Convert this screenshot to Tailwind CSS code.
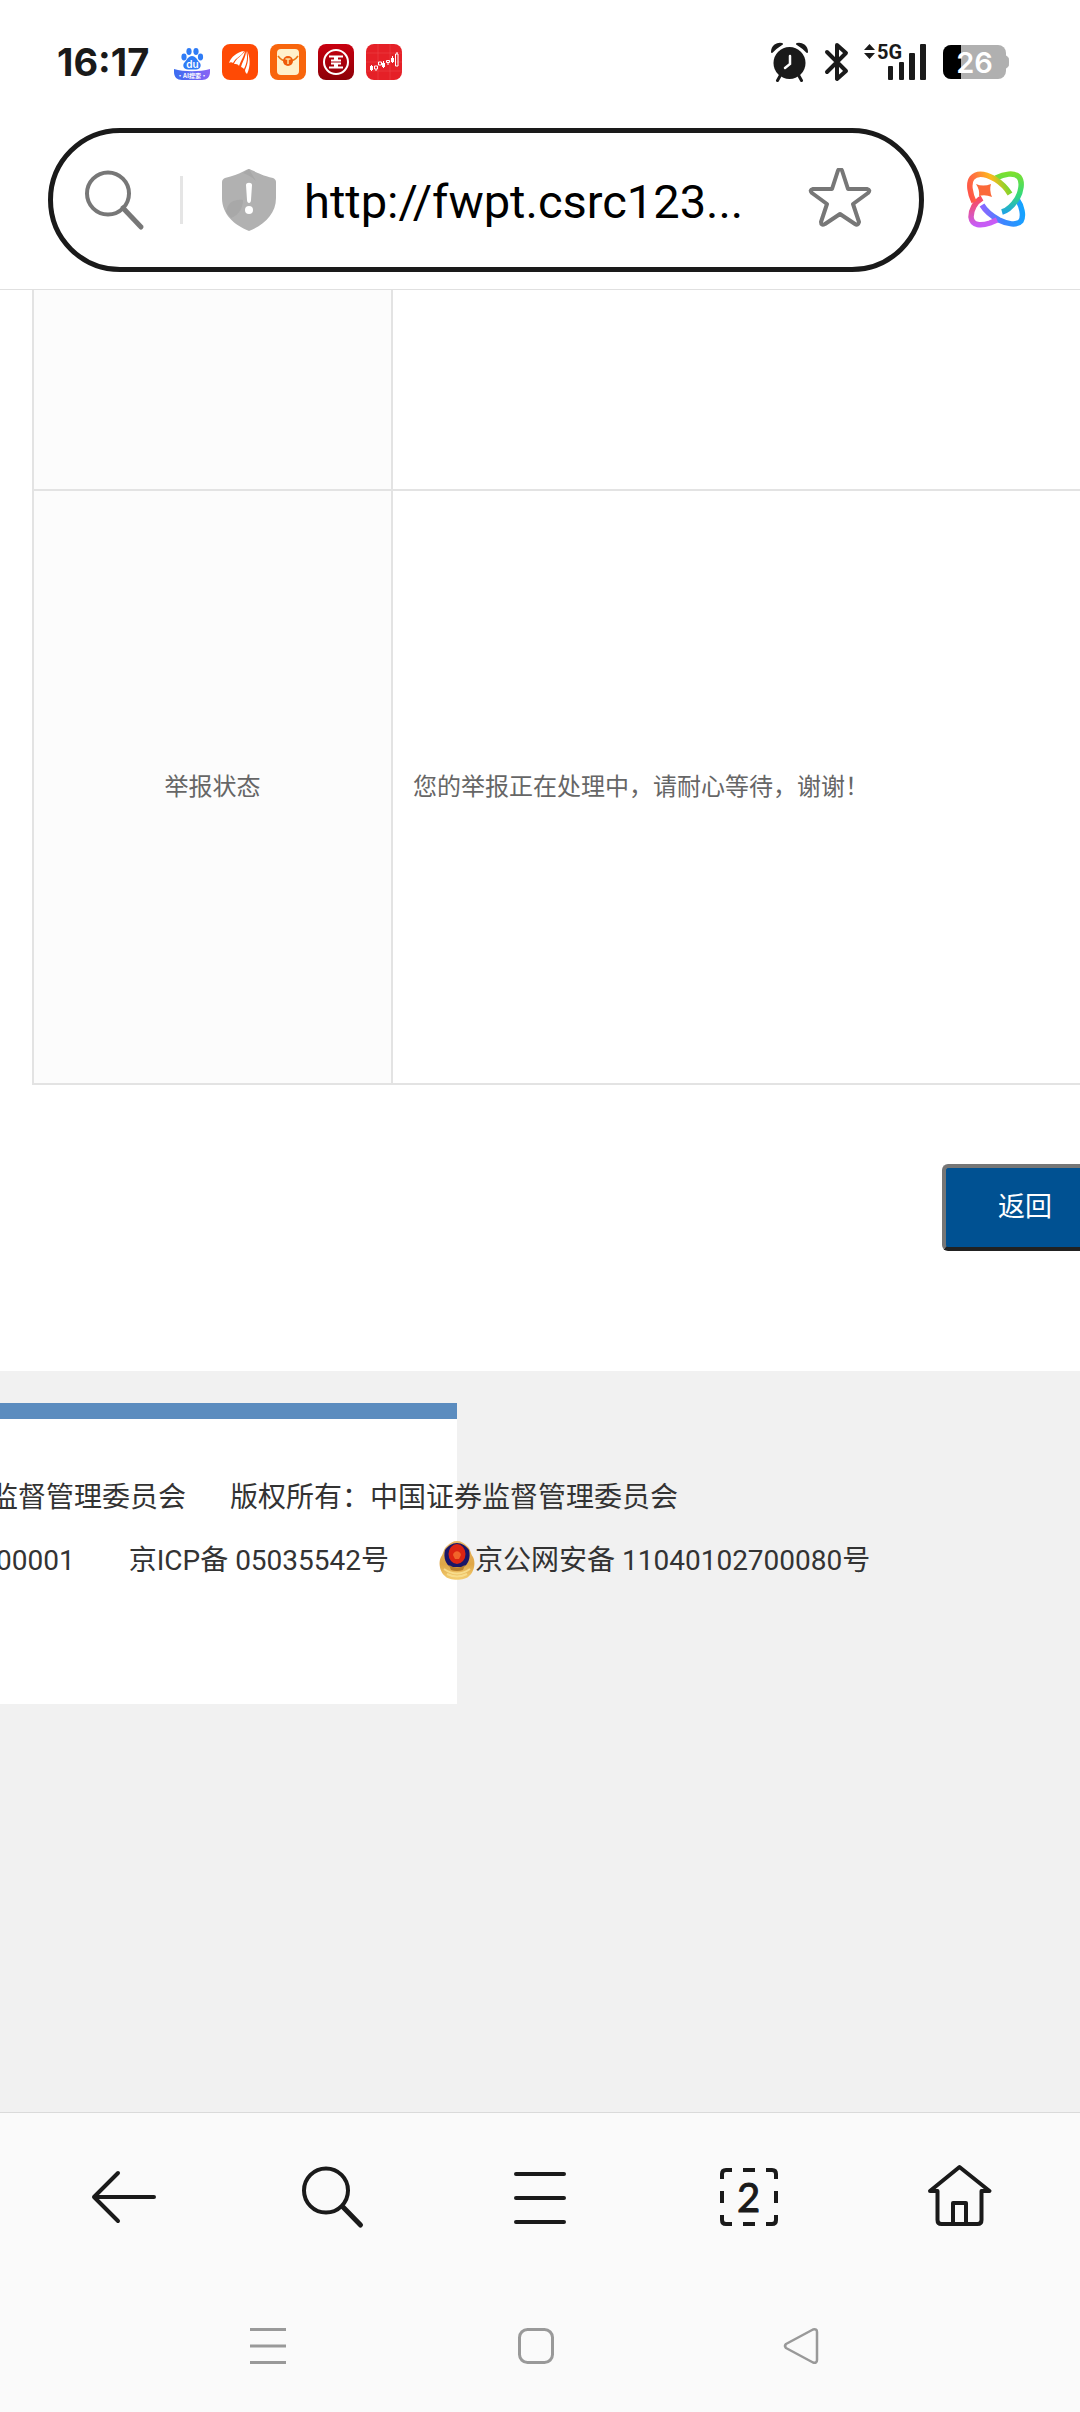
<!DOCTYPE html>
<html lang="zh-CN">
<head>
<meta charset="utf-8">
<meta name="viewport" content="width=device-width, initial-scale=1">
<title>举报状态</title>
<script src="https://cdn.jsdelivr.net/npm/@tailwindcss/browser@4"></script>
</head>
<body class="flex min-h-screen flex-col overflow-x-hidden bg-white font-['Roboto','Noto_Sans_CJK_SC',sans-serif] text-[#333333]">

<!-- Status bar -->
<div class="flex h-[124px] items-center pr-[71px] pl-[57px]">
  <time class="w-[117px] font-['Inter',sans-serif] text-[38px] font-bold text-[#1a1a1a]">16:17</time>
  <div class="flex gap-3">
    <svg class="size-9" viewBox="0 0 36 36" role="img" aria-label="百度">
      <defs><linearGradient id="bd" x1="0" y1="0" x2="1" y2="0"><stop offset="0" stop-color="#3a6df0"/><stop offset="1" stop-color="#8a63f5"/></linearGradient></defs>
      <g fill="#2f7cf6"><ellipse cx="10" cy="13" rx="2.600" ry="3.400"/><ellipse cx="15" cy="7.500" rx="2.600" ry="3.400"/><ellipse cx="22" cy="7.500" rx="2.600" ry="3.400"/><ellipse cx="26.500" cy="13" rx="2.600" ry="3.400"/><path d="M18 12c4 0 5 4 7.500 6.500s1 7-3.500 7h-8c-4.500 0-6-4.500-3.500-7S14 12 18 12z"/></g>
      <text x="18.500" y="23.500" text-anchor="middle" font-family="Inter" font-size="10" font-weight="600" fill="#fff">du</text>
      <path d="M0 25c10 3 26 3 36 0v3c0 5-3 8-8 8H8c-5 0-8-3-8-8z" fill="url(#bd)"/>
      <text x="18" y="33.500" text-anchor="middle" font-family="Noto Sans CJK SC" font-size="6" font-weight="700" fill="#fff">·AI搜索·</text>
    </svg>
    <svg class="size-9" viewBox="0 0 36 36" role="img" aria-label="应用">
      <rect width="36" height="36" rx="8" fill="#ff4a05"/>
      <g fill="#fff"><path d="M7 19c2-6 8-11 15-12 -2 5-8 6-11 12-1-1-3-1-4 0z"/><path d="M12 20c2-6 8-8 11-13-1 6-4 9-6 15-1-2-3-2-5-2z"/><path d="M24 7c0 6-3 9-5 16 1 0 2 1 3 2 3-6 4-12 2-18z"/><path d="M25 7c3 5 4 15 0 23-1-1-2-2-2-4 3-6 4-13 2-19z"/></g>
    </svg>
    <svg class="size-9" viewBox="0 0 36 36" role="img" aria-label="红包">
      <rect width="36" height="36" rx="8" fill="#f8650c"/><rect x="7" y="5" width="22" height="26" rx="4" fill="#fff0cb"/>
      <path d="M8 12c5 7 15 7 20 0" fill="none" stroke="#e87413" stroke-width="1.500"/><circle cx="18" cy="17" r="5" fill="#ef5a0b"/><path d="M15.500 15h5M18 15v5" stroke="#ffe0a0" stroke-width="1.500"/>
    </svg>
    <svg class="size-9" viewBox="0 0 36 36" role="img" aria-label="工商银行">
      <defs><linearGradient id="ic" x1="0" y1="0" x2="0" y2="1"><stop offset="0" stop-color="#c9000f"/><stop offset="1" stop-color="#8c0008"/></linearGradient></defs>
      <rect width="36" height="36" rx="8" fill="url(#ic)"/>
      <g fill="none" stroke="#fff" stroke-width="2"><circle cx="18" cy="18" r="12"/><path d="M11 12.500h6v4h-4M25 12.500h-6v4h4M11 23.500h6v-4h-4M25 23.500h-6v-4h4"/></g>
    </svg>
    <svg class="size-9" viewBox="0 0 36 36" role="img" aria-label="股票">
      <rect width="36" height="36" rx="8" fill="#e52027"/>
      <path d="M0 9h36M0 18h36M0 27h36M12 0v36M24 0v36" stroke="#ee4a4e" stroke-width=".5"/>
      <g fill="#fff"><rect x="4" y="22" width="3" height="4"/><path d="M5 21h1v6H5z"/><rect x="16" y="19" width="3" height="4"/><path d="M17 17h1v7h-1z"/><rect x="25" y="14" width="3" height="4"/><path d="M26 12h1v7h-1z"/></g>
      <g fill="none" stroke="#fff"><path d="M8.500 22h3v3h-3zM12.500 18h3v3h-3zM20.500 16.500h3v2h-3zM29.500 10h2.500v12h-2.500zM10 25v2M22 18v3M31 8v2"/></g>
    </svg>
  </div>

  <div class="ml-auto flex items-center">
    <svg class="h-10 w-10" viewBox="769 42 40 40" role="img" aria-label="闹钟">
      <circle cx="789.500" cy="63" r="16" fill="#1a1a1a"/>
      <path d="M780 76l-2.500 4.500M799 76l2.500 4.500" stroke="#1a1a1a" stroke-width="3" stroke-linecap="round"/>
      <path d="M772 52c0-6 5-9 10-8-3 2-7 4-10 8zM807 52c0-6-5-9-10-8 3 2 7 4 10 8z" fill="#1a1a1a" stroke="#1a1a1a" stroke-width="2" stroke-linejoin="round"/>
      <path d="M790 56v8l-5 4" fill="none" stroke="#fff" stroke-width="2.500" stroke-linecap="round"/>
    </svg>
    <svg class="ml-[14px] h-10 w-7" viewBox="823 42 28 40" role="img" aria-label="蓝牙">
      <path d="M827 52l19 19-9 8V45l9 8-19 19" fill="none" stroke="#1a1a1a" stroke-width="4" stroke-linejoin="round" stroke-linecap="round"/>
    </svg>
    <svg class="ml-3 h-10 w-16" viewBox="863 42 64 40" role="img" aria-label="5G 信号">
      <path d="M864 50l5.500-6 5.500 6zM864 53h11l-5.500 6z" fill="#1a1a1a"/>
      <text x="877" y="59" font-family="Roboto" font-size="20" font-weight="700" fill="#1a1a1a">5G</text>
      <g fill="#1a1a1a"><rect x="888" y="66" width="5" height="14" rx="1"/><rect x="899" y="62" width="5" height="18" rx="1"/><rect x="909" y="53" width="6" height="27" rx="1"/><rect x="920" y="44" width="6" height="36" rx="1"/></g>
    </svg>
    <svg class="ml-4 h-9 w-[66px]" viewBox="943 45 66 36" role="img" aria-label="电量 26%">
      <defs><clipPath id="bt"><rect x="943" y="46" width="63" height="34" rx="8"/></clipPath></defs>
      <g clip-path="url(#bt)"><path d="M943 46h63v34h-63z" fill="#b0b0b0"/><path d="M943 46h18v34h-18z"/></g>
      <path d="M1006 57c4 1 4 11 0 12z" fill="#b0b0b0" stroke="#b0b0b0" stroke-width="1"/>
      <text x="974.500" y="74" text-anchor="middle" font-family="Inter" font-size="29" font-weight="600" fill="#fff">26</text>
    </svg>
  </div>
</div>

<!-- Address bar -->
<header class="flex items-center border-b border-[#e0e0e0] pt-1 pb-[17px] pl-12">
  <form class="flex h-36 min-w-0 flex-1 items-center rounded-full border-[5px] border-[#1a1a1a] pr-[47px] pl-7">
    <button type="button" aria-label="搜索" class="shrink-0">
      <svg class="h-[68px] w-[68px]" viewBox="81 166 68 68" fill="none" stroke="#777777" stroke-width="4" stroke-linecap="round"><circle cx="108" cy="193.500" r="21"/><path d="M123 208l18 19" stroke-width="5"/></svg>
    </button>
    <span class="ml-[31px] h-12 w-[3px] shrink-0 bg-[#e5e5e5]"></span>
    <svg class="ml-[39px] h-16 w-[54px] shrink-0" viewBox="222 168 54 64" role="img" aria-label="不安全">
      <path d="M249 169c2 0 8 5 24 9 2 1 3 2 3 4v16c0 16-12 27-27 33-15-6-27-17-27-33v-16c0-2 1-3 3-4 16-4 22-9 24-9z" fill="#b1b1b1"/>
      <path d="M226 212c2-10 8-13 17-12 0 6-3 15-12 18z" fill="#a8a8a8"/><path d="M243 173l6-4 7 12c-4-4-8-6-13-8z" fill="#a8a8a8"/>
      <path d="M246 185c0-3 6-3 6 0l-1 15c0 4-4 4-4 0z" fill="#fff"/><circle cx="249" cy="210" r="4" fill="#fff"/>
    </svg>
    <input type="text" aria-label="网址" value="http://fwpt.csrc123..." class="ml-7 h-16 min-w-0 flex-1 bg-transparent pt-1 text-[47px] text-black outline-none">
    <button type="button" aria-label="收藏" class="shrink-0">
      <svg class="h-16 w-16" viewBox="808 168 64 64" fill="none" stroke="#777777" stroke-width="4" stroke-linejoin="round"><path d="M838 170.500q2-3 4 0L848 189h19q4 1 1 4l-15 11 6 18q-1 4-4 2l-15-10-15 10q-4 2-4-2l6-18-15-11q-3-3 1-4h19z"/></svg>
    </button>
  </form>
  <button type="button" aria-label="AI 助手" class="mr-[53px] ml-[41px] shrink-0">
    <svg class="size-[62px]" viewBox="965 169 62 62">
      <defs>
        <linearGradient id="a1" gradientUnits="userSpaceOnUse" x1="968" y1="200" x2="1010" y2="185"><stop offset="0" stop-color="#ff4b4b"/><stop offset=".35" stop-color="#ff7a3d"/><stop offset=".65" stop-color="#ffb81c"/><stop offset="1" stop-color="#65dc30"/></linearGradient>
        <linearGradient id="a2" gradientUnits="userSpaceOnUse" x1="1010" y1="172" x2="1010" y2="216"><stop offset="0" stop-color="#7fe02c"/><stop offset=".5" stop-color="#36db78"/><stop offset="1" stop-color="#1a9bf5"/></linearGradient>
        <linearGradient id="a3" gradientUnits="userSpaceOnUse" x1="978" y1="215" x2="1024" y2="205"><stop offset="0" stop-color="#a35cff"/><stop offset=".5" stop-color="#3c86ff"/><stop offset="1" stop-color="#12a5ff"/></linearGradient>
        <linearGradient id="a4" gradientUnits="userSpaceOnUse" x1="970" y1="197" x2="975" y2="225"><stop offset="0" stop-color="#ff4b4b"/><stop offset="1" stop-color="#c75cf6"/></linearGradient>
      </defs>
      <g fill="none" stroke-width="5.500">
        <path d="M1017 199c5 7 7 17 4 22-4 5-14 3-22-1-9-5-14-10-17-15" stroke="url(#a3)"/>
        <path d="M982 198c-7 4-11 12-11 19 1 9 10 9 19 6l7-3" stroke="url(#a4)"/>
        <path d="M996 178c8-4 18-6 23-1 4 5 2 15-2 22-4 6-8 11-15 13" stroke="url(#a2)"/>
        <path d="M974 202c-4-8-6-19-2-24 5-6 14-4 23 1 8 5 12 10 15 15" stroke="url(#a1)"/>
      </g>
      <path d="M976 184q7 3 15 0-2 6 1 13-7-3-13-1 1-6-3-12z" fill="#fb6939"/>
    </svg>
  </button>
</header>

<main class="flex flex-col pl-8">
  <table class="w-full border-collapse text-2xl text-[#666666]">
    <tbody>
      <tr class="h-[200px]">
        <th class="w-[359px] border-x-2 border-b-2 border-[#e3e3e3] bg-[#fcfcfc]"></th>
        <td class="border-b-2 border-[#e3e3e3]"></td>
      </tr>
      <tr class="h-[594px]">
        <th scope="row" class="border-x-2 border-b-2 border-[#e3e3e3] bg-[#fcfcfc] font-normal">举报状态</th>
        <td class="border-b-2 border-[#e3e3e3] pl-5">您的举报正在处理中，请耐心等待，谢谢！</td>
      </tr>
    </tbody>
  </table>
  <div class="-mr-7 flex justify-end pt-[79px] pb-[120px]">
    <button type="button" class="rounded-md border-4 border-t-[#767676] border-r-[#212121] border-b-[#212121] border-l-[#767676] bg-[#005192] px-[52px] py-5 text-[27px] leading-[39px] text-white">返回</button>
  </div>
</main>

<footer class="flex-1 bg-[#f1f1f1] pt-8 text-[28px] whitespace-nowrap">
  <div class="h-[301px] w-[457px] border-t-[16px] border-[#5b8cbf] bg-white pt-[47px]">
    <p class="-ml-[10px] flex h-[63px] items-center gap-11"><span>监督管理委员会</span><span>版权所有：中国证券监督管理委员会</span></p>
    <p class="-ml-1 flex h-[63px] items-center">
      <span>00001</span>
      <a href="#" class="ml-[54px]">京ICP备 05035542号</a>
      <a href="#" class="ml-[50px] flex items-center">
        <svg class="h-10 w-9" viewBox="0 0 36 40" role="img" aria-label="警徽">
          <defs><linearGradient id="gd" x1="0" y1="0" x2="0" y2="1"><stop offset="0" stop-color="#e8b866"/><stop offset=".6" stop-color="#dfa646"/><stop offset="1" stop-color="#f4cf72"/></linearGradient></defs>
          <path d="M18 0c4 0 7 2 10 5 4 3 3 7 6 11 3 6 1 15-4 19-4 5-20 5-24 0-5-4-7-13-4-19 3-4 2-8 6-11 3-3 6-5 10-5z" fill="url(#gd)"/>
          <path d="M18 2c5 0 9 3 12 7 2 8-1 15-6 17H12C7 24 4 17 6 9c3-4 7-7 12-7z" fill="#1a1667"/>
          <ellipse cx="18" cy="13" rx="8.500" ry="10" fill="#dc2412"/><path d="M14 14c1-5 7-5 8 0l-2 4h-4z" fill="#f1642a"/>
          <path d="M10 24q8 5 16 0l-2 5q-6 2-12 0z" fill="#b57d2c"/><path d="M5 28q13 9 26 0M8 33q10 5 20 0" fill="none" stroke="#f7dc8b" stroke-width="2"/>
        </svg><span>京公网安备 11040102700080号</span></a>
    </p>
  </div>
</footer>

<!-- Browser toolbar -->
<nav aria-label="浏览器工具栏" class="flex h-[173px] justify-around border-t border-[#dadada] bg-[#fafafa] px-5 text-[#1a1a1a]">
  <button type="button" aria-label="后退" class="flex flex-1 items-center justify-center"><svg class="size-20" viewBox="84 2159 80 80" fill="none" stroke="currentColor" stroke-width="4" stroke-linecap="round" stroke-linejoin="round"><path d="M118 2173l-24 24 24 24M94 2197h60"/></svg></button>
  <button type="button" aria-label="搜索" class="flex flex-1 items-center justify-center"><svg class="size-20" viewBox="292 2159 80 80" fill="none" stroke="currentColor" stroke-width="4" stroke-linecap="round"><circle cx="326" cy="2190.500" r="22"/><path d="M343 2207l17.500 18" stroke-width="5"/></svg></button>
  <button type="button" aria-label="菜单" class="flex flex-1 items-center justify-center"><svg class="size-20" viewBox="500 2159 80 80" fill="none" stroke="currentColor" stroke-width="4" stroke-linecap="round"><path d="M516 2174h48M516 2198h48M516 2222h48"/></svg></button>
  <button type="button" aria-label="标签页" class="flex flex-1 items-center justify-center"><svg class="size-20" viewBox="708 2159 80 80" fill="none" stroke="currentColor" stroke-width="4"><path d="M722 2179v-5q0-4 4-4h6M743 2170h12M766 2170h6q4 0 4 4v5M776 2191v12M776 2215v5q0 4-4 4h-6M755 2224h-12M732 2224h-6q-4 0-4-4v-5M722 2203v-12"/><text x="748.500" y="2212" text-anchor="middle" font-family="Lato" font-size="40" fill="currentColor" stroke="currentColor" stroke-width="1">2</text></svg></button>
  <button type="button" aria-label="主页" class="flex flex-1 items-center justify-center"><svg class="size-20" viewBox="916 2159 80 80" fill="none" stroke="currentColor" stroke-width="4" stroke-linejoin="round" stroke-linecap="round"><path d="M937 2191h-7l29.500-24 30 24h-8v29q0 4-4 4h-36q-4 0-4-4v-29M953 2224v-21h13v21"/></svg></button>
</nav>

<!-- System navigation -->
<nav aria-label="系统导航" class="grid h-[127px] grid-cols-3 bg-[#fafafa] pr-[144px] pl-[134px] text-[#999999]">
  <button type="button" aria-label="最近任务" class="flex items-start justify-center pt-[37px]"><svg class="size-12" viewBox="244 2322 48 48" fill="none" stroke="currentColor" stroke-width="3"><path d="M250 2329.500h36M250 2346h36M250 2362.500h36"/></svg></button>
  <button type="button" aria-label="主屏幕" class="flex items-start justify-center pt-[37px]"><svg class="size-12" viewBox="511 2322 48 48" fill="none" stroke="currentColor" stroke-width="3"><rect x="519.500" y="2329.500" width="33" height="33" rx="8"/></svg></button>
  <button type="button" aria-label="返回" class="flex items-start justify-center pt-[37px]"><svg class="size-12" viewBox="778 2322 48 48" fill="none" stroke="currentColor" stroke-width="2.500" stroke-linejoin="round"><path d="M786 2344l27-14.500q4-1 4 2.500v28q0 3.500-4 2.500l-27-14.500q-2-2 0-4z"/></svg></button>
</nav>
</body>
</html>
